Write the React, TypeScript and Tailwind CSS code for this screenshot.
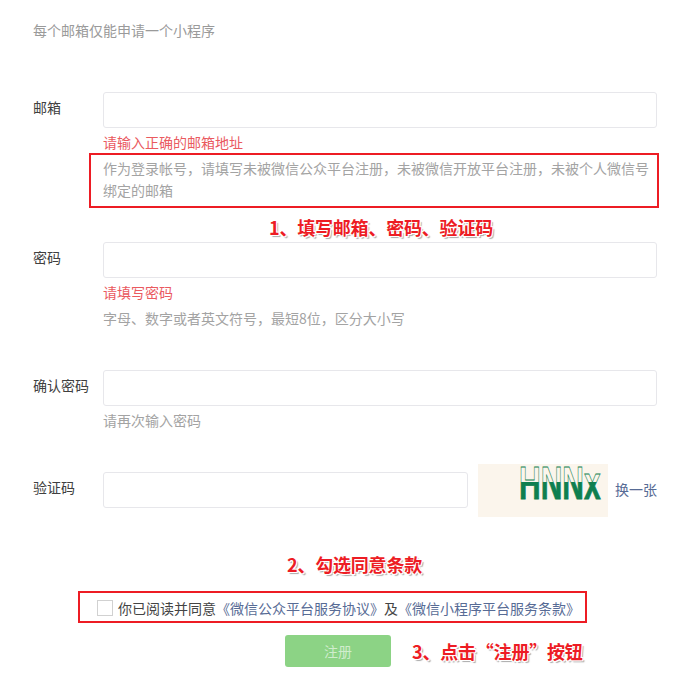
const font = "[font-family:'Noto_Sans_CJK_SC','Liberation_Sans',sans-serif]";

function Row({ label, children }: { label: string; children: React.ReactNode }) {
  return (
    <div className="flex">
      <div className="w-[70px] shrink-0 text-sm leading-[31px] text-[#404040]">{label}</div>
      <div className="flex-1">{children}</div>
    </div>
  );
}

function Field() {
  return <input className="block h-9 w-full rounded-[3px] border border-[#e7e7eb] bg-white outline-none" />;
}

function Note({ text, error }: { text: string; error?: boolean }) {
  return <p className={`pt-[3px] pb-px text-sm leading-[22px] ${error ? "text-[#ea5a5f]" : "text-[#a3a3a3]"}`}>{text}</p>;
}

function Callout({ className, children }: { className: string; children: React.ReactNode }) {
  return (
    <div className={`absolute whitespace-nowrap text-lg leading-6 font-bold tracking-[-0.2px] text-[#ed1c24] [text-shadow:1px_1px_0_#fff,-1px_-1px_0_#fff,1px_-1px_0_#fff,-1px_1px_0_#fff,2px_2px_1px_#aaa] ${className}`}>
      {children}
    </div>
  );
}

function Captcha() {
  return (
    <svg viewBox="0 0 130 53" className="-mt-2 ml-[10px] h-[53px] w-[130px] shrink-0 bg-[#fbf5ec]">
      <defs>
        <linearGradient id="captcha-fill" gradientUnits="userSpaceOnUse" x1="0" y1="-22" x2="0" y2="0">
          <stop offset="0.5" stopColor="#fbf5ec" />
          <stop offset="0.5" stopColor="#0f7f4f" />
        </linearGradient>
      </defs>
      <text
        transform="translate(41 35) scale(1 1.57)"
        fontFamily="Liberation Sans"
        fontWeight="700"
        fontSize="30"
        fill="url(#captcha-fill)"
        stroke="#0f7f4f"
        strokeWidth="0.5"
      >
        HNNx
      </text>
    </svg>
  );
}

export default function App() {
  return (
    <div className={`relative h-[686px] w-[691px] overflow-hidden bg-white pl-[33px] pr-[34px] pt-[19px] ${font}`}>
      <p className="mb-[51px] text-sm leading-[22px] text-[#9a9a9a]">每个邮箱仅能申请一个小程序</p>

      <div className="flex flex-col gap-10">
        <Row label="邮箱">
          <Field />
          <Note error text="请输入正确的邮箱地址" />
          <Note text="作为登录帐号，请填写未被微信公众平台注册，未被微信开放平台注册，未被个人微信号绑定的邮箱" />
        </Row>
        <Row label="密码">
          <Field />
          <Note error text="请填写密码" />
          <Note text="字母、数字或者英文符号，最短8位，区分大小写" />
        </Row>
        <Row label="确认密码">
          <Field />
          <Note text="请再次输入密码" />
        </Row>
        <Row label="验证码">
          <div className="flex h-9 items-start">
            <div className="w-[365px] shrink-0"><Field /></div>
            <Captcha />
            <a className="ml-[7px] whitespace-nowrap text-sm leading-[35px] text-[#576b95]">换一张</a>
          </div>
        </Row>
      </div>

      <label className="mt-[89px] ml-16 flex items-center text-sm leading-[22px] text-[#444]">
        <span className="mr-[5px] h-4 w-4 shrink-0 border border-[#d1d1d1] bg-white" />
        <span>你已阅读并同意</span>
        <a className="text-[#576b95]">《微信公众平台服务协议》</a>
        <span>及</span>
        <a className="text-[#576b95]">《微信小程序平台服务条款》</a>
      </label>

      <button className="mt-4 ml-[252px] block h-8 w-[106px] rounded-[3px] bg-[#8cd385] pb-px text-sm text-white/60">注册</button>

      <div className="absolute left-[89px] top-[153px] h-[55px] w-[570px] border-2 border-[#ed1c24]" />
      <div className="absolute left-[78px] top-[591px] h-8 w-[509px] border-2 border-[#ed1c24]" />
      <Callout className="left-[269px] top-[215px]">1、填写邮箱、密码、验证码</Callout>
      <Callout className="left-[287px] top-[552px]">2、勾选同意条款</Callout>
      <Callout className="left-[412px] top-[639px]">3、点击“注册”按钮</Callout>
    </div>
  );
}
